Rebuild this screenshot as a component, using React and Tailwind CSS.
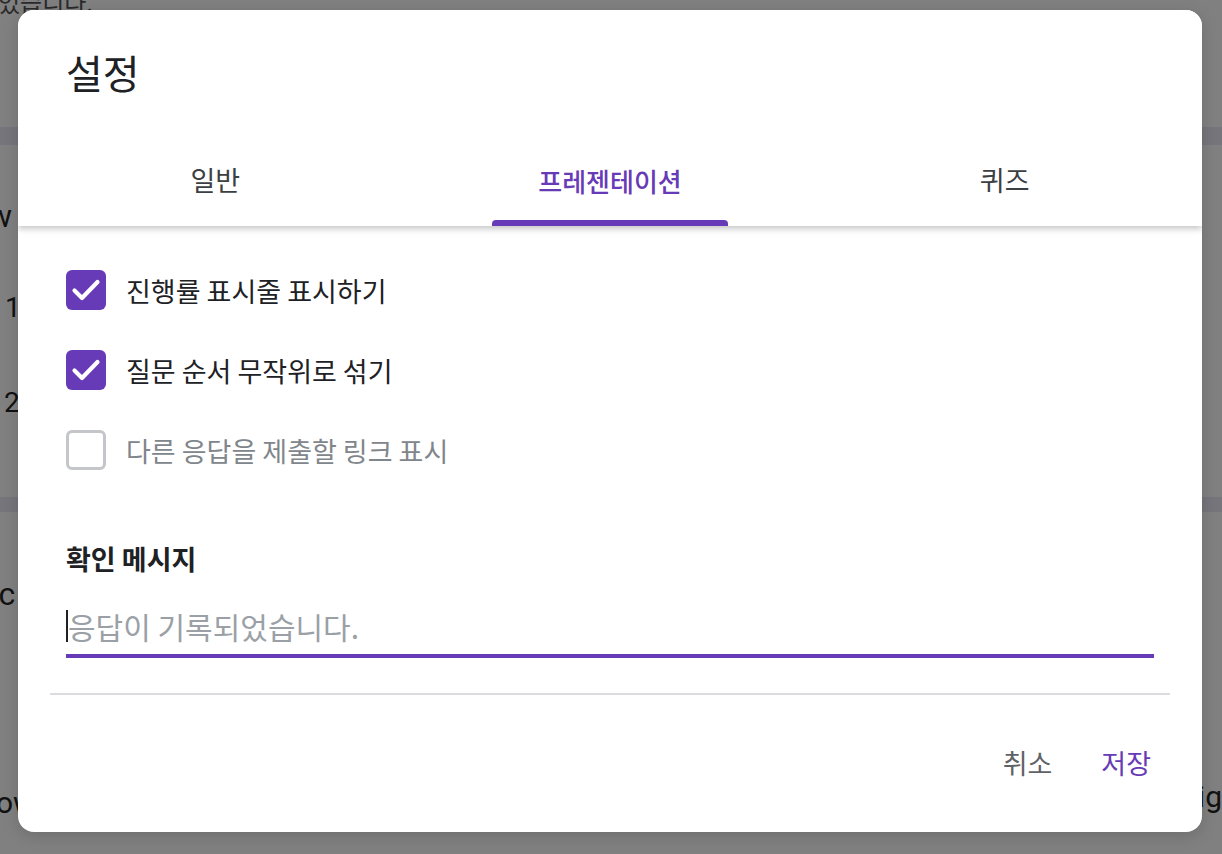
import React from "react";

const FONT = "font-['Noto_Sans_CJK_KR','Noto_Sans',Roboto,sans-serif]";

function Check({ checked, label, muted }) {
  return (
    <div className="flex items-center h-10">
      {checked ? (
        <div className="w-10 h-10 rounded-[6px] bg-[#673ab7] flex items-center justify-center">
          <svg width="40" height="40" viewBox="0 0 40 40" fill="none">
            <path d="M8.5 20.5 L16 28 L31.5 12" stroke="white" strokeWidth="4.2" strokeLinecap="round" strokeLinejoin="round" />
          </svg>
        </div>
      ) : (
        <div className="w-10 h-10 rounded-[6px] border-[3px] border-[#c4c6ca] bg-white" />
      )}
      <span className={`ml-5 text-[27px] leading-none ${muted ? "text-[#80868b]" : "text-[#202124]"}`}>{label}</span>
    </div>
  );
}

export default function App() {
  return (
    <div className={`relative w-[1222px] h-[854px] overflow-hidden bg-[#808080] ${FONT}`}>
      {/* dimmed page behind */}
      <div className="flex flex-col">
        <div className="h-[127px] text-[24px] leading-none text-[#2a2a2a] -mt-[10px] -ml-[2px]">었습니다.</div>
        <div className="h-[18px] bg-[#77757c] mt-[10px]" />
        <div className="h-[55px]" />
        <div className="h-[94px] text-[32px] leading-none text-[#111] -ml-[31px] font-['Roboto',sans-serif]">Sw</div>
        <div className="h-[95px] text-[28px] leading-none text-[#111] pl-[5px] font-['Roboto',sans-serif]">1</div>
        <div className="h-[108px] text-[28px] leading-none text-[#111] pl-[4px] font-['Roboto',sans-serif]">2</div>
        <div className="h-[15px] bg-[#77757c]" />
        <div className="h-[66px]" />
        <div className="h-[210px] text-[32px] leading-none text-[#111] -ml-[18px] font-['Roboto',sans-serif]">sc</div>
        <div className="flex justify-between text-[30px] leading-none text-[#111] font-['Roboto',sans-serif]">
          <span className="-ml-[4px]">ow</span>
          <span className="-mt-[6px]">ig</span>
        </div>
      </div>

      {/* dialog */}
      <div className="absolute left-[18px] top-[10px] w-[1184px] h-[822px] bg-white rounded-[16px] overflow-hidden flex flex-col shadow-[0_4px_16px_rgba(0,0,0,0.15)]">
        <div className="relative z-10 bg-white shadow-[0_3px_6px_rgba(0,0,0,0.22)]">
          <div className="pl-12 pt-10 text-[40px] leading-[44px] text-[#202124]">설정</div>
          <div className="mt-10 grid grid-cols-3 h-[92px]">
            <div className="flex items-center justify-center text-[27px] text-[#3c4043]">일반</div>
            <div className="relative flex items-center justify-center text-[26px] text-[#673ab7] font-medium">
              프레젠테이션
              <div className="absolute bottom-0 left-1/2 -translate-x-1/2 w-[236px] h-[6px] rounded-t-[4px] bg-[#673ab7]" />
            </div>
            <div className="flex items-center justify-center text-[27px] text-[#3c4043]">퀴즈</div>
          </div>
        </div>

        <div className="flex flex-col px-12 pt-[44px]">
          <div className="flex flex-col gap-10">
            <Check checked label="진행률 표시줄 표시하기" />
            <Check checked label="질문 순서 무작위로 섞기" />
            <Check label="다른 응답을 제출할 링크 표시" muted />
          </div>
          <div className="mt-[75px] text-[27px] leading-[27px] font-bold text-[#202124]">확인 메시지</div>
          <div className="mt-[37px] flex items-center h-[34px]">
            <div className="w-[2px] h-[32px] bg-[#202124]" />
            <span className="text-[30px] leading-none text-[#9aa0a6]">응답이 기록되었습니다.</span>
          </div>
          <div className="mt-[11px] h-[4px] bg-[#673ab7]" />
        </div>
        <div className="mx-8 mt-[35px] h-[2px] bg-[#dadce0]" />
        <div className="flex justify-end items-center pr-[51px] mt-[54px] gap-[49px] text-[27px] leading-none">
          <span className="text-[#5f6368]">취소</span>
          <span className="text-[#673ab7]">저장</span>
        </div>
      </div>
    </div>
  );
}
